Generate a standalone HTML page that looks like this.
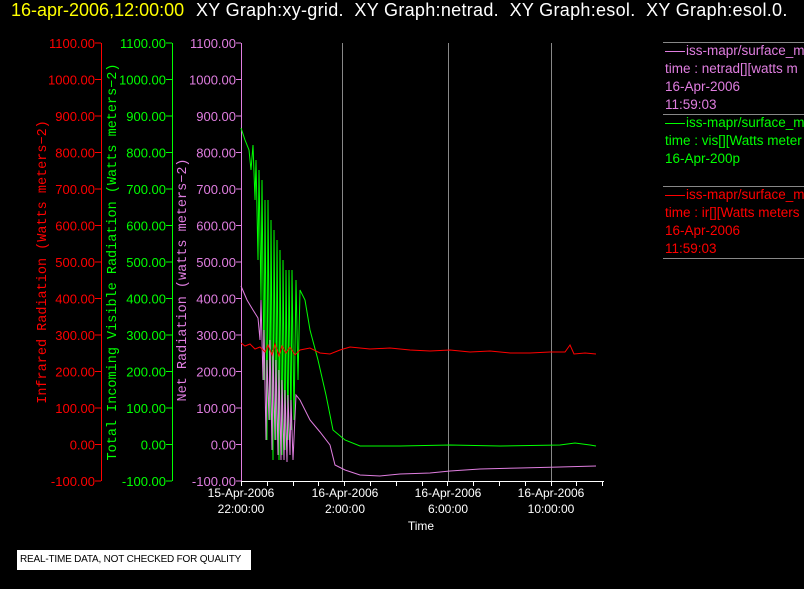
<!DOCTYPE html>
<html><head><meta charset="utf-8"><style>
body{margin:0;width:804px;height:589px;background:#000;overflow:hidden;position:relative;font-family:"Liberation Sans",sans-serif}
.t{position:absolute;white-space:nowrap}
.d{display:inline-block;width:20px;height:1px;background:currentColor;vertical-align:middle;margin-right:1px}
</style></head><body>
<div class="t" style="left:11px;top:0px;font-size:18px;color:#ff0;letter-spacing:0">16-apr-2006,12:00:00</div>
<div class="t" style="left:196px;top:0px;font-size:18px;color:#fff;letter-spacing:0.3px">XY Graph:xy-grid.&nbsp; XY Graph:netrad.&nbsp; XY Graph:esol.&nbsp; XY Graph:esol.0.</div>
<svg width="804" height="589" style="position:absolute;left:0;top:0" font-family="Liberation Sans, sans-serif" font-size="12">
<g stroke-width="1">
<line x1="101.5" y1="43" x2="101.5" y2="481" stroke="#f00"/>
<line x1="172.5" y1="43" x2="172.5" y2="481" stroke="#0f0"/>
<line x1="241.5" y1="43" x2="241.5" y2="481" stroke="#e07ee0"/>
<line x1="241" y1="481.5" x2="604" y2="481.5" stroke="#fff"/>
<line x1="342.5" y1="43" x2="342.5" y2="481" stroke="#888"/>
<line x1="448.5" y1="43" x2="448.5" y2="481" stroke="#888"/>
<line x1="551.5" y1="43" x2="551.5" y2="481" stroke="#888"/>
</g>
<g id="ticks"></g>
<g text-anchor="end" font-size="13">
<g fill="#f00" id="ra"></g><g fill="#0f0" id="ga"></g><g fill="#e07ee0" id="pa"></g>
</g>
<g fill="#fff" text-anchor="middle">
<text x="241" y="497">15-Apr-2006</text><text x="241" y="513">22:00:00</text>
<text x="345" y="497">16-Apr-2006</text><text x="345" y="513">2:00:00</text>
<text x="448" y="497">16-Apr-2006</text><text x="448" y="513">6:00:00</text>
<text x="551" y="497">16-Apr-2006</text><text x="551" y="513">10:00:00</text>
<text x="421" y="530">Time</text>
</g>
<g font-family="Liberation Mono, monospace" font-size="13.5" text-anchor="middle">
<text transform="translate(46,262) rotate(-90)" fill="#f00">Infrared Radiation (Watts meters−2)</text>
<text transform="translate(116,262) rotate(-90)" fill="#0f0">Total Incoming Visible Radiation (Watts meters−2)</text>
<text transform="translate(186,280) rotate(-90)" fill="#e07ee0">Net Radiation (watts meters−2)</text>
</g>
<polyline fill="none" stroke="#0f0" points="241,128 245,140 249,150 251,170 253,145 255,200 256,160 258,260 259,170 261,300 262,180 264,380 265,200 267,440 268,200 270,420 271,220 273,460 274,230 276,440 277,240 279,460 280,250 282,455 283,260 285,450 286,270 288,440 289,270 291,430 292,270 294,420 296,280 298,380 300,290 305,300 310,330 318,360 326,395 333,430 345,440 360,446 400,446 450,445 500,446 560,445 575,443 590,445 596,446"/>
<polyline fill="none" stroke="#e07ee0" points="241,286 247,300 253,310 258,318 260,340 261,300 263,380 264,330 266,440 267,360 269,420 270,340 272,450 273,350 275,440 276,360 278,455 279,370 281,460 282,380 284,460 285,390 287,462 288,395 290,455 291,400 293,460 296,395 300,400 310,420 320,432 330,445 335,465 345,470 360,475 380,476 400,474 430,473 450,471 480,469 520,468 560,467 596,466"/>
<polyline fill="none" stroke="#f00" points="241,343 245,346 250,344 255,349 260,347 265,352 268,345 272,355 275,344 279,356 282,346 286,353 290,347 295,355 300,350 310,348 320,353 330,354 340,350 350,347 370,349 390,348 410,350 430,351 450,350 470,352 490,351 510,353 530,353 550,352 565,352 570,345 574,354 585,353 596,354"/>
</svg>
<div style="position:absolute;left:663px;top:42px;width:141px;height:1px;background:#888"></div>
<div style="position:absolute;left:663px;top:114px;width:141px;height:1px;background:#888"></div>
<div style="position:absolute;left:663px;top:186px;width:141px;height:1px;background:#888"></div>
<div style="position:absolute;left:663px;top:258px;width:141px;height:1px;background:#888"></div>
<div class="t" style="left:665px;top:42px;font-size:13.5px;line-height:18px;color:#e07ee0"><span class="d"></span>iss-mapr/surface_m<br>time : netrad[][watts m<br>16-Apr-2006<br>11:59:03</div>
<div class="t" style="left:665px;top:114px;font-size:13.5px;line-height:18px;color:#0f0"><span class="d"></span>iss-mapr/surface_m<br>time : vis[][Watts meter<br>16-Apr-200p</div>
<div class="t" style="left:665px;top:186px;font-size:13.5px;line-height:18px;color:#f00"><span class="d"></span>iss-mapr/surface_m<br>time : ir[][Watts meters<br>16-Apr-2006<br>11:59:03</div>
<div class="t" style="left:17px;top:550px;width:234px;height:20px;background:#fff;color:#000;font-size:10px;line-height:20px;text-indent:3px;letter-spacing:-0.2px;overflow:hidden">REAL-TIME DATA, NOT CHECKED FOR QUALITY</div>
<script>
var ns="http://www.w3.org/2000/svg";
function el(p,t,a,txt){var e=document.createElementNS(ns,t);for(var k in a)e.setAttribute(k,a[k]);if(txt)e.textContent=txt;p.appendChild(e);}
var ra=document.getElementById('ra'),ga=document.getElementById('ga'),pa=document.getElementById('pa'),tk=document.getElementById('ticks');
for(var i=0;i<=12;i++){var v=1100-i*100,y=43+i*36.5,s=v.toFixed(2);
el(ra,'text',{x:95,y:y+5},s);el(ga,'text',{x:166,y:y+5},s);el(pa,'text',{x:236,y:y+5},s);
el(tk,'line',{x1:95,x2:101,y1:y,y2:y,stroke:'#f00'});el(tk,'line',{x1:166,x2:172,y1:y,y2:y,stroke:'#0f0'});el(tk,'line',{x1:236,x2:241,y1:y,y2:y,stroke:'#e07ee0'});}
for(var x=241;x<=604;x+=25.8){el(tk,'line',{x1:Math.round(x)+.5,x2:Math.round(x)+.5,y1:481,y2:486,stroke:'#fff'});}
</script>
</body></html>
